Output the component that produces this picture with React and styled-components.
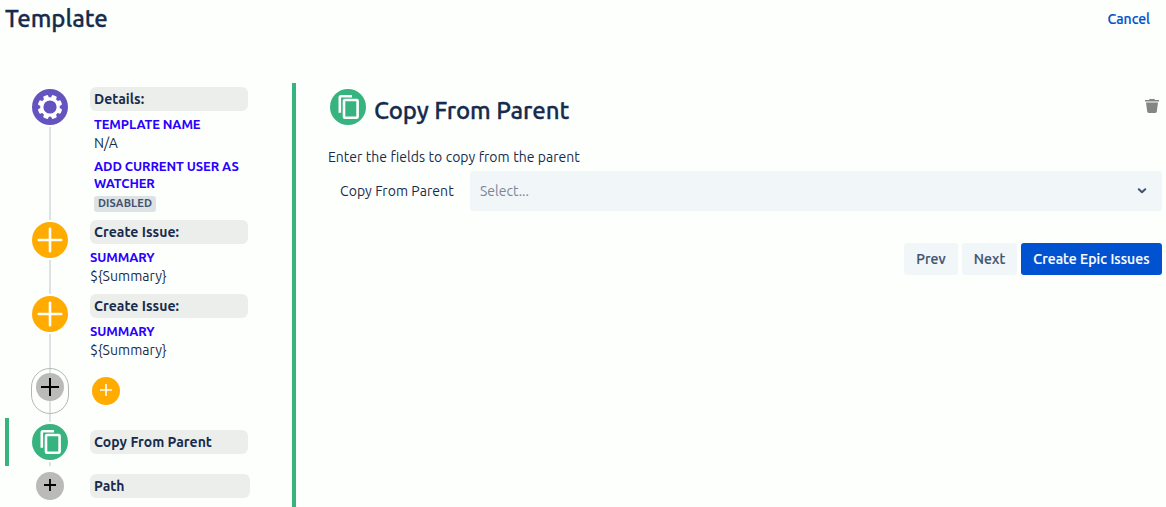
import React from "react";

import styled, { createGlobalStyle } from "styled-components";

const GlobalStyle = createGlobalStyle`
    body {
        margin: 0;
        background: #fdfffd;
        overflow: hidden;
    }
    * {
        box-sizing: border-box;
    }
`;

const Page = styled.div`
    width: 100%;
    height: 507px;
    display: flex;
    flex-direction: column;
    font-family: Ubuntu, "Noto Sans", "Open Sans", sans-serif;
    font-size: 14px;
    line-height: 20px;
    color: #172b4d;
    overflow: hidden;
`;

const Header = styled.header`
    height: 83px;
    flex: none;
    display: flex;
    justify-content: space-between;
    align-items: flex-start;
    padding: 5px 16px 0 5px;
`;

const Title = styled.h1`
    margin: 0;
    font-size: 24px;
    font-weight: 500;
    line-height: 28px;
    white-space: nowrap;
    letter-spacing: -0.1px;
    -webkit-text-stroke: 0.3px currentColor;
`;

const CancelLink = styled.a`
    margin-top: 4px;
    font-weight: 500;
    color: #0052cc;
    -webkit-text-stroke: 0.2px currentColor;
`;

const Body = styled.div`
    flex: 1;
    display: flex;
    min-height: 0;
`;

const Sidebar = styled.nav`
    width: 292px;
    flex: none;
    padding: 4px 0 0 5px;
`;

const Step = styled.div`
    display: flex;
    height: ${(p) => p.$height}px;
    margin-top: ${(p) => p.$gap || 0}px;
    border-left: 4px solid ${(p) => (p.$active ? "#36b37e" : "transparent")};
`;

const Rail = styled.div`
    width: 82px;
    flex: none;
    display: flex;
    flex-direction: column;
    align-items: center;
    gap: ${(p) => (p.$joined ? 0 : 2)}px;
    padding-top: ${(p) => (p.$flush ? 0 : 2)}px;
`;

const Line = styled.div`
    width: 2px;
    height: ${(p) => (p.$height ? `${p.$height}px` : "auto")};
    flex: ${(p) => (p.$height ? "none" : 1)};
    background: #dde2e5;
`;

const Circle = styled.div`
    width: ${(p) => p.$size || 36}px;
    height: ${(p) => p.$size || 36}px;
    flex: none;
    display: flex;
    margin-left: ${(p) => p.$inset || 0}px;
    border-radius: 50%;
    background: ${(p) => p.$color};
    color: ${(p) => p.$ink || "#fff"};
    svg {
        display: block;
        width: 100%;
        height: 100%;
    }
`;

const Oval = styled.div`
    width: 38px;
    height: 46px;
    flex: none;
    display: flex;
    flex-direction: column;
    align-items: center;
    border: 1px solid #b5b6b5;
    border-radius: 19px;
`;

const Content = styled.div`
    width: ${(p) => p.$width || 158}px;
    margin-left: -1px;
    padding-top: ${(p) => p.$top || 0}px;
`;

const StepName = styled.div`
    height: 24px;
    padding: 0 4px;
    border-radius: 6px;
    background: #eceeec;
    font-weight: 600;
    line-height: 24px;
    letter-spacing: 0.03px;
    white-space: nowrap;
`;

const Fields = styled.div`
    padding: 5px 0 0 ${(p) => (p.$indent ? 4 : 0)}px;
`;

const FieldName = styled.div`
    font-size: 13px;
    font-weight: 700;
    line-height: 17px;
    letter-spacing: -0.1px;
    color: #2a00ff;
`;

const FieldValue = styled.div`
    height: 20px;
    letter-spacing: 0.08px;
    margin-bottom: 5px;
`;

const Lozenge = styled.span`
    display: block;
    width: 62px;
    height: 16px;
    margin-top: 4px;
    border-radius: 3px;
    background: #dde2e5;
    color: #42526e;
    font-size: 11px;
    font-weight: 700;
    line-height: 15px;
    text-align: center;
    letter-spacing: 0.1px;
`;

const Main = styled.main`
    flex: 1;
    border-left: 4px solid #36b37e;
    padding: 6px 4px 0 32px;
`;

const PanelHeader = styled.div`
    display: flex;
    height: 36px;
    padding-left: 2px;
    gap: 8px;
    h1 {
        flex: 1;
        margin-top: 8px;
    }
`;

const TrashButton = styled.span`
    width: 14px;
    height: 14px;
    margin: 10px 3px 0 0;
    svg {
        display: block;
    }
`;

const Hint = styled.div`
    margin-top: 22px;
    height: 24px;
    word-spacing: 0.3px;
`;

const FieldRow = styled.label`
    display: flex;
    align-items: center;
    padding-left: 12px;
`;

const FieldLabel = styled.span`
    width: 130px;
    flex: none;
    letter-spacing: 0.06px;
`;

const Select = styled.div`
    flex: 1;
    height: 40px;
    display: flex;
    align-items: center;
    justify-content: space-between;
    padding: 0 15px 0 10px;
    border-radius: 3px;
    background: #f1f6f9;
    color: #7a869a;
`;

const Actions = styled.div`
    display: flex;
    justify-content: flex-end;
    gap: 4px;
    margin-top: 32px;
`;

const Button = styled.button`
    width: ${(p) => p.$width}px;
    height: 32px;
    padding: 0;
    border: 0;
    border-radius: 3px;
    background: ${(p) => (p.$primary ? "#0052d0" : "#f1f6f9")};
    color: ${(p) => (p.$primary ? "#fff" : "#42526e")};
    font: inherit;
    font-weight: 500;
    letter-spacing: 0.08px;
    white-space: nowrap;
    -webkit-text-stroke: 0.2px currentColor;
`;

const GearIcon = () => (
    <svg viewBox="0 0 36 36">
        <g fill="currentColor">
            {[22.5, 67.5, 112.5, 157.5].map((angle) => (
                <rect
                    key={angle}
                    x="15.4"
                    y="5.8"
                    width="5.2"
                    height="24.4"
                    rx="1.2"
                    transform={`rotate(${angle} 18 18)`}
                />
            ))}
            <circle cx="18" cy="18" r="9.8" />
        </g>
        <circle cx="18" cy="18" r="6.6" fill="#6554c0" />
    </svg>
);

const CopyIcon = () => (
    <svg viewBox="0 0 36 36" fill="none" stroke="currentColor" strokeWidth="2.6">
        <path d="M22 7.3H11q-1.2 0-1.2 1.2v15.3" />
        <rect x="14" y="11" width="13.6" height="17.8" rx="1" />
    </svg>
);

// arm is half of the stroke length, cy lets the sign sit above the centre
const PlusIcon = ({ size = 36, arm = 11.2, cy = size / 2, weight = 2.6 }) => (
    <svg viewBox={`0 0 ${size} ${size}`}>
        <path
            d={`M${size / 2 - arm} ${cy}h${arm * 2}M${size / 2} ${cy - arm}v${arm * 2}`}
            stroke="currentColor"
            strokeWidth={weight}
            strokeLinecap={size === 36 ? "round" : "butt"}
        />
    </svg>
);

const TrashIcon = () => (
    <svg width="14" height="14" viewBox="0 0 14 14" fill="#858584">
        <path d="M4.5 0h5l.6 1H14v1.6H0V1h3.9z" />
        <path d="M1 3.6h12l-1.2 9q-.2 1.4-1.4 1.4H3.6q-1.2 0-1.4-1.4z" />
    </svg>
);

const ChevronIcon = () => (
    <svg width="10" height="6" viewBox="0 0 10 6" fill="none" stroke="#42526e" strokeWidth="2">
        <path d="M1.8 1.2 5 4.2 8.2 1.2" strokeLinecap="round" strokeLinejoin="round" />
    </svg>
);

const IssueStep = () => (
    <Step $height={74}>
        <Rail>
            <Circle $color="#ffab00">
                <PlusIcon />
            </Circle>
            <Line />
        </Rail>
        <Content>
            <StepName>Create Issue:</StepName>
            <Fields>
                <FieldName>SUMMARY</FieldName>
                <FieldValue>{"${Summary}"}</FieldValue>
            </Fields>
        </Content>
    </Step>
);

export default function App() {
    return (
        <Page>
            <GlobalStyle />
            <Header>
                <Title>Template</Title>
                <CancelLink>Cancel</CancelLink>
            </Header>
            <Body>
                <Sidebar>
                    <Step $height={133}>
                        <Rail>
                            <Circle $color="#6554c0">
                                <GearIcon />
                            </Circle>
                            <Line />
                        </Rail>
                        <Content>
                            <StepName>Details:</StepName>
                            <Fields $indent>
                                <FieldName>TEMPLATE NAME</FieldName>
                                <FieldValue>N/A</FieldValue>
                                <FieldName>ADD CURRENT USER AS WATCHER</FieldName>
                                <Lozenge>DISABLED</Lozenge>
                            </Fields>
                        </Content>
                    </Step>
                    <IssueStep />
                    <IssueStep />
                    <Step $height={50}>
                        <Rail $flush $joined>
                            <Oval>
                                <Line $height={4} />
                                <Circle $size={28} $color="#babbb9" $ink="#000">
                                    <PlusIcon size={28} arm={9} weight={2} />
                                </Circle>
                                <Line />
                            </Oval>
                            <Line />
                        </Rail>
                        <Content $top={9}>
                            <Circle $size={28} $color="#ffab00" $inset={2}>
                                <PlusIcon size={28} arm={6} cy={13} weight={1.6} />
                            </Circle>
                        </Content>
                    </Step>
                    <Step $height={48} $active>
                        <Rail $flush>
                            <Line $height={4} />
                            <Circle $color="#36b37e">
                                <CopyIcon />
                            </Circle>
                            <Line />
                        </Rail>
                        <Content $top={12}>
                            <StepName>Copy From Parent</StepName>
                        </Content>
                    </Step>
                    <Step $height={30} $gap={4}>
                        <Rail>
                            <Circle $size={28} $color="#babbb9" $ink="#000">
                                <PlusIcon size={28} arm={6} cy={13} weight={1.8} />
                            </Circle>
                        </Rail>
                        <Content $width={160} $top={4}>
                            <StepName>Path</StepName>
                        </Content>
                    </Step>
                </Sidebar>
                <Main>
                    <PanelHeader>
                        <Circle $color="#36b37e">
                            <CopyIcon />
                        </Circle>
                        <Title>Copy From Parent</Title>
                        <TrashButton>
                            <TrashIcon />
                        </TrashButton>
                    </PanelHeader>
                    <Hint>Enter the fields to copy from the parent</Hint>
                    <FieldRow>
                        <FieldLabel>Copy From Parent</FieldLabel>
                        <Select>
                            Select...
                            <ChevronIcon />
                        </Select>
                    </FieldRow>
                    <Actions>
                        <Button $width={54}>Prev</Button>
                        <Button $width={55}>Next</Button>
                        <Button $width={141} $primary>
                            Create Epic Issues
                        </Button>
                    </Actions>
                </Main>
            </Body>
        </Page>
    );
}
